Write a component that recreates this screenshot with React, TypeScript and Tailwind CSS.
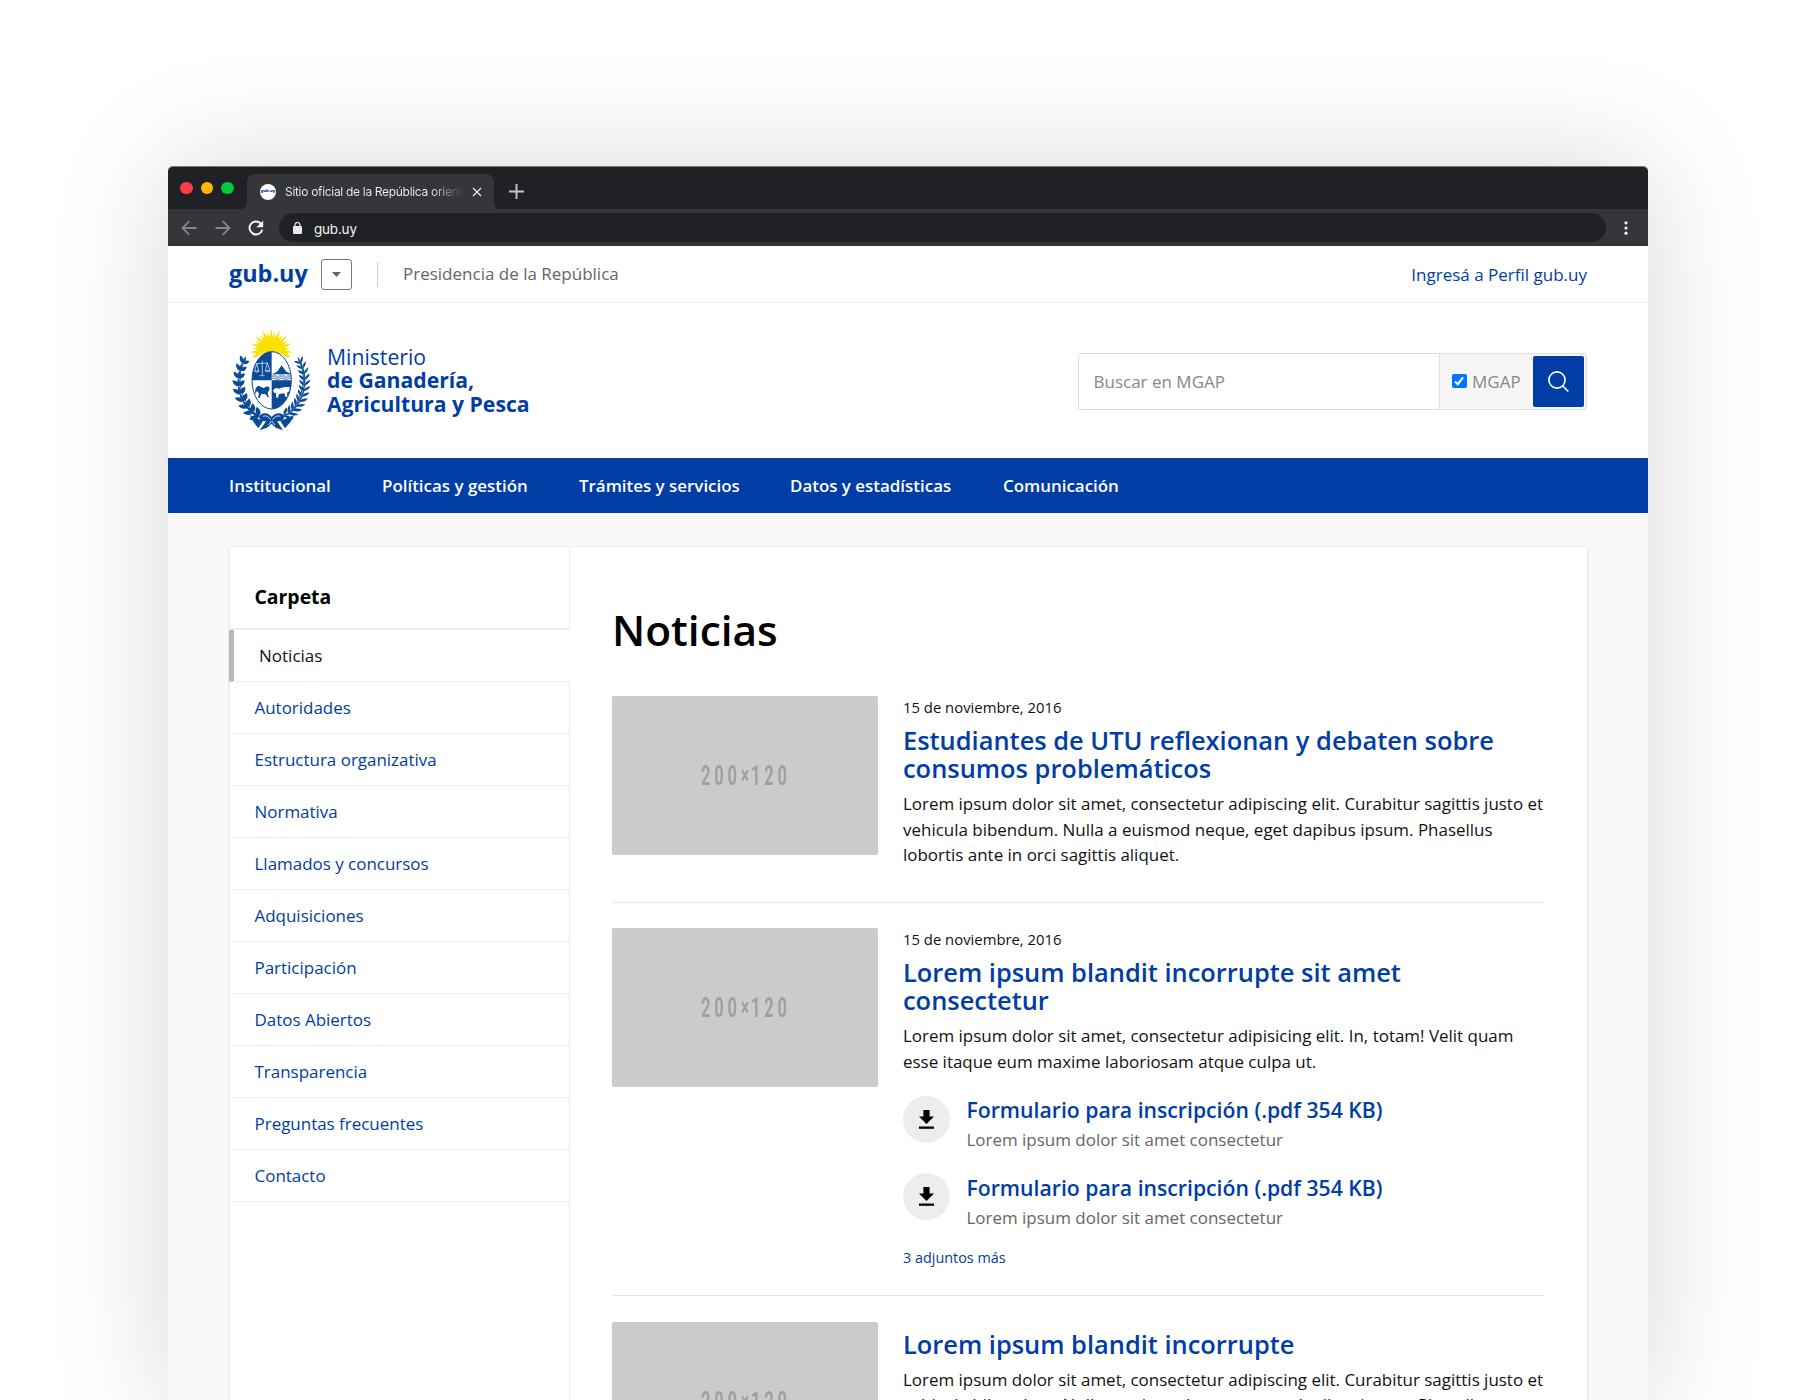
import React from "react";

const NAV = [
  { label: "Institucional", w: "w-[153px]" },
  { label: "Políticas y gestión", w: "w-[197px]" },
  { label: "Trámites y servicios", w: "w-[211px]" },
  { label: "Datos y estadísticas", w: "w-[213px]" },
  { label: "Comunicación", w: "w-[160px]" },
];

const FOLDER = [
  "Autoridades",
  "Estructura organizativa",
  "Normativa",
  "Llamados y concursos",
  "Adquisiciones",
  "Participación",
  "Datos Abiertos",
  "Transparencia",
  "Preguntas frecuentes",
  "Contacto",
];

function Leaf({ x, y, a, l, w }: { x: number; y: number; a: number; l: number; w: number }) {
  return (
    <path
      d={`M0 0C${l * 0.5} ${-w * 1.5} ${l * 1.3} ${-w * 1.4} ${l * 2} 0C${l * 1.3} ${w * 1.2} ${l * 0.5} ${w * 1.2} 0 0Z`}
      transform={`translate(${x} ${y}) rotate(${a})`}
    />
  );
}

function Branch({ right = false }: { right?: boolean }) {
  const leaves: React.ReactNode[] = [];
  const n = right ? 12 : 9;
  const l = right ? 14.5 : 15;
  const w = right ? 4 : 6.4;
  for (let i = 0; i < n; i++) {
    const t = ((112 + (i * 96) / (n - 1)) * Math.PI) / 180;
    const x = 130 + Math.cos(t) * 97;
    const y = 160 + Math.sin(t) * 112;
    const base = (Math.atan2(112 * Math.cos(t), -97 * Math.sin(t)) * 180) / Math.PI;
    const taper = 1.1 - (i / n) * 0.3;
    leaves.push(<Leaf key={`a${i}`} x={x} y={y} a={base - 44} l={l * taper} w={w * taper} />);
    leaves.push(<Leaf key={`b${i}`} x={x} y={y} a={base + 46} l={l * 0.82 * taper} w={w * taper} />);
    leaves.push(<Leaf key={`c${i}`} x={x} y={y} a={base - 4} l={l * 0.9 * taper} w={w * 0.6} />);
  }
  return (
    <g transform={right ? "translate(260 0) scale(-1 1)" : undefined}>
      <path d="M124 284C60 262 14 180 45 104" fill="none" stroke="#0a4a96" strokeWidth="3" />
      {leaves}
    </g>
  );
}

function Coat() {
  const rays: React.ReactNode[] = [];
  for (let i = 0; i < 17; i++) {
    const a = -184 + i * 11.75;
    rays.push(
      <path
        key={i}
        d={i % 2 === 0 ? "M24 -8L66 0L24 8Z" : "M24 -8L56 0L24 8Z"}
        transform={`translate(129 69) rotate(${a})`}
      />
    );
  }
  return (
    <svg className="h-[104px] w-[83px] shrink-0" viewBox="2 1 249 312">
      <g fill="#fae100">
        {rays}
        <circle cx="129" cy="69" r="36" />
      </g>
      <g fill="#0a4a96">
        <Branch />
        <Branch right />
        <path d="M96 262C108 252 122 258 130 268C138 258 152 252 166 262C172 272 160 284 146 280L164 308L142 300L130 288L116 300L94 308L114 280C98 284 88 272 96 262Z" />
        <path d="M64 262L104 280L90 302L76 284ZM198 262L156 280L170 302L186 284Z" />
      </g>
      <g fill="none" stroke="#fff" strokeWidth="2.4">
        <path d="M104 266C114 262 120 268 128 276M156 266C146 262 140 268 132 276M120 292L130 280L140 292" />
      </g>
      <ellipse cx="130" cy="158" rx="66" ry="93" fill="#fff" />
      <path d="M74 92A66 93 0 0 1 186 92L172 86Q130 60 88 86Z" fill="#fae100" />
      <clipPath id="shield">
        <ellipse cx="130" cy="158" rx="59" ry="86" />
      </clipPath>
      <ellipse cx="130" cy="158" rx="59" ry="86" fill="#fff" stroke="#0a4a96" strokeWidth="3" />
      <g clipPath="url(#shield)" fill="#0a4a96">
        <path d="M70 70H130V158H70ZM130 158H190V246H130Z" />
        <path d="M132 140L146 132L160 113L174 132L192 140Z" />
        <path
          d="M130 144Q136 138 142 144T154 144T166 144T178 144T190 144M130 149Q136 143 142 149T154 149T166 149T178 149T190 149M130 154Q136 148 142 154T154 154T166 154T178 154T190 154"
          fill="none"
          stroke="#0a4a96"
          strokeWidth="2"
        />
        <path d="M81 184L88 174L94 176L106 181L116 176L124 180L123 188L119 192L118 199L122 208L118 209L112 200L99 199L94 211L89 210L92 197L86 190L80 200Z" />
      </g>
      <g fill="none" stroke="#fff" strokeWidth="2">
        <path d="M102 99V142M84 108L119 106M94 144H109M85 108L79 130H92L85 108M117 106L111 129H125L117 106M79 131Q85 137 92 131M111 130Q118 136 125 130" />
      </g>
      <path
        d="M134 190C139 178 146 180 152 183C162 178 170 178 184 178L183 190L176 196L177 208H172L168 197L152 199L149 210H144L143 196L137 195Z"
        fill="#fff"
      />
    </svg>
  );
}

function BrowserBar() {
  return (
    <div className="h-20 overflow-hidden rounded-t-[5px] border-t border-[#77787a] bg-[#202124] font-['Inter',sans-serif]">
      <div className="flex h-[42px] items-end">
        <div className="flex h-[42px] w-[79px] items-center gap-2 pl-3">
          <i className="size-[12.5px] rounded-full bg-[#ff3b47]" />
          <i className="size-[12.5px] rounded-full bg-[#ffb700]" />
          <i className="size-[12.5px] rounded-full bg-[#00ca3c]" />
        </div>
        <div className="relative flex h-[35px] w-[247px] items-center rounded-t-[8px] bg-[#35363a] pl-[13px]">
          <svg className="absolute bottom-0 -left-[6px] size-[6px]" viewBox="0 0 6 6">
            <path d="M6 0A6 6 0 0 1 0 6H6Z" fill="#35363a" />
          </svg>
          <svg className="absolute -right-[6px] bottom-0 size-[6px]" viewBox="0 0 6 6">
            <path d="M0 0A6 6 0 0 0 6 6H0Z" fill="#35363a" />
          </svg>
          <span className="flex size-4 items-center justify-center rounded-full bg-white font-['Open_Sans',sans-serif] text-[4.2px] font-extrabold text-[#003da5]">
            gub.uy
          </span>
          <span className="mt-px ml-[9px] w-[178px] overflow-hidden bg-linear-to-r from-[#f1f1f1] from-82% to-[#35363a] bg-clip-text text-[12px] leading-5 tracking-[-0.31px] whitespace-nowrap text-transparent">
            Sitio oficial de la República oriental
          </span>
          <svg className="ml-[9px] size-[10px]" viewBox="0 0 10 10">
            <path d="M1 1L9 9M9 1L1 9" stroke="#e8eaed" strokeWidth="1.2" />
          </svg>
        </div>
        <svg className="mb-[10px] ml-[15px] size-[15px]" viewBox="0 0 15 15">
          <path d="M7.5 0V15M0 7.5H15" stroke="#c4c6ca" strokeWidth="1.9" />
        </svg>
      </div>
      <div className="flex h-[37px] items-center bg-[#35363a] pl-[13px]">
        <svg className="size-4" viewBox="0 0 16 16">
          <path d="M15.5 8H1.5M8.3 1.2L1.5 8L8.3 14.8" fill="none" stroke="#85868a" strokeWidth="1.8" />
        </svg>
        <svg className="ml-[18px] size-4" viewBox="0 0 16 16">
          <path d="M.5 8H14.5M7.7 1.2L14.5 8L7.7 14.8" fill="none" stroke="#85868a" strokeWidth="1.8" />
        </svg>
        <svg className="ml-[17px] size-4" viewBox="0 0 16 16">
          <path d="M12.9 3.6A6.5 6.5 0 1 0 14.3 9.8" fill="none" stroke="#f1f3f4" strokeWidth="2" />
          <path d="M15.2 .4V7.2H8.4Z" fill="#f1f3f4" />
        </svg>
        <div className="ml-[15px] flex h-[29px] w-[1327px] items-center rounded-full bg-[#202124] pl-[14px]">
          <svg className="h-[12px] w-[9px]" viewBox="0 0 9 12">
            <rect x="0" y="4" width="9" height="8" rx="1" fill="#e8eaed" />
            <path d="M2 5V3A2.5 2.5 0 0 1 7 3V5" fill="none" stroke="#e8eaed" strokeWidth="1.2" />
          </svg>
          <span className="mt-[2px] ml-[12px] text-[13.5px] leading-5 tracking-[-0.2px] text-[#f1f3f4]">gub.uy</span>
        </div>
        <svg className="ml-[18px] h-[14px] w-[4px]" viewBox="0 0 4 14">
          <circle cx="2" cy="1.8" r="1.6" fill="#f1f3f4" />
          <circle cx="2" cy="7" r="1.6" fill="#f1f3f4" />
          <circle cx="2" cy="12.2" r="1.6" fill="#f1f3f4" />
        </svg>
      </div>
    </div>
  );
}

function Thumb() {
  return (
    <div className="flex h-[159px] w-[265.5px] shrink-0 items-center justify-center rounded-[2px] bg-[#cbcbcb] font-['Roboto',sans-serif] text-[27.5px] font-bold text-[#a0a0a0]">
      <span className="mt-px ml-[3px] flex scale-x-[0.6] items-center tracking-[6.4px] whitespace-nowrap">
        200<span className="text-[25px] tracking-[3.5px]">×</span>120
      </span>
    </div>
  );
}

function Attachment() {
  return (
    <div className="flex h-[77.5px] gap-[16.5px]">
      <div className="flex size-[47px] items-center justify-center rounded-full bg-[#ededed]">
        <svg className="h-[19px] w-[15px]" viewBox="0 0 15 19">
          <path d="M4.4 0H10.6V6.6H15L7.5 14L0 6.6H4.4Z" />
          <path d="M0 16.5H15V18.8H0Z" />
        </svg>
      </div>
      <div>
        <div className="mt-[0.5px] text-[21.2px] leading-[28px] font-semibold whitespace-nowrap text-[#003da5]">
          Formulario para inscripción (.pdf 354 KB)
        </div>
        <div className="mt-[3px] text-[16.97px] leading-[25.5px] text-[#666]">Lorem ipsum dolor sit amet consectetur</div>
      </div>
    </div>
  );
}

function NewsItem({ date, title, lines, className = "", children }: {
  date?: string;
  title: string[];
  lines: string[];
  className?: string;
  children?: React.ReactNode;
}) {
  return (
    <article className={`flex gap-[25.5px] border-[#e8e8e8] ${className}`}>
      <Thumb />
      <div className="whitespace-nowrap">
        {date ? <div className="mb-[7.5px] text-[14.85px] leading-[22.5px]">{date}</div> : <div className="h-[8.5px]" />}
        <h2 className="text-[25.43px] leading-[28.3px] font-semibold text-[#003da5]">
          {title.map((t) => (
            <span key={t} className="block">{t}</span>
          ))}
        </h2>
        <p className="mt-[8.5px] text-[16.97px] leading-[25.5px]">
          {lines.map((t) => (
            <span key={t} className="block">{t}</span>
          ))}
        </p>
        {children}
      </div>
    </article>
  );
}

export default function App() {
  return (
    <div className="h-[1400px] w-[1820px] overflow-hidden bg-white px-[168px] pt-[166px] font-['Open_Sans',sans-serif] text-[#111]">
      <div className="h-[1240px] w-[1480px] rounded-t-[5px] bg-[#f9f9f9] shadow-[0_0_120px_rgba(0,0,0,0.16)]">
        <BrowserBar />

        <div className="flex h-[57px] items-center border-b border-[#ededed] bg-white px-[61px]">
          <span className="w-[92px] text-[23.4px] font-bold text-[#003da5]">gub.uy</span>
          <span className="flex size-[31px] items-center justify-center rounded-[3px] border border-[#777]">
            <svg className="h-[5px] w-[9px]" viewBox="0 0 9 5">
              <path d="M0 0H9L4.5 5Z" fill="#666" />
            </svg>
          </span>
          <span className="ml-[25px] h-[25px] border-l border-[#ccc]" />
          <span className="ml-[25px] text-[17px] text-[#666]">Presidencia de la República</span>
          <span className="mt-[2px] ml-auto text-[17px] text-[#003da5]">Ingresá a Perfil gub.uy</span>
        </div>

        <div className="flex h-[155px] items-start bg-white px-[61px] pt-[25px]">
          <Coat />
          <div className="mt-[17px] ml-[15px] text-[21.2px] leading-[23.4px] text-[#003da5]">
            <div>Ministerio</div>
            <div className="font-bold">de Ganadería,</div>
            <div className="font-bold">Agricultura y Pesca</div>
          </div>
          <div className="mt-[25px] ml-auto flex h-[57px] w-[509px] items-center rounded-[3px] border border-[#dfdfdf] bg-[#f6f6f6] text-[17px] text-[#888]">
            <div className="flex h-full w-[361px] items-center rounded-l-[3px] border-r border-[#dfdfdf] bg-white pl-[14.5px]">
              Buscar en MGAP
            </div>
            <span className="-mt-px ml-[12px] flex size-[14.5px] items-center justify-center rounded-[2px] bg-[#0075ff]">
              <svg className="size-[12px]" viewBox="0 0 12 12">
                <path d="M2 6.5L4.8 9.2L10 2.4" fill="none" stroke="#fff" strokeWidth="2" />
              </svg>
            </span>
            <span className="ml-[5.5px]">MGAP</span>
            <span className="mr-[2px] ml-auto flex h-[51px] w-[51px] items-center justify-center rounded-[2px] bg-[#003da5]">
              <svg className="size-[21px]" viewBox="0 0 21 21" fill="none" stroke="#fff" strokeWidth="1.6">
                <circle cx="9" cy="9" r="8.1" />
                <path d="M14.6 14.8L20.3 20.5" />
              </svg>
            </span>
          </div>
        </div>

        <nav className="flex h-[55px] items-center bg-[#003da5] pt-px pl-[61px] text-[16.93px] font-semibold text-white">
          {NAV.map((n) => (
            <span key={n.label} className={`shrink-0 whitespace-nowrap ${n.w}`}>{n.label}</span>
          ))}
        </nav>

        <div className="mt-[34px] mr-[61px] ml-[62px] flex h-[1000px] rounded-[3px] bg-white shadow-[0_1px_4px_rgba(0,0,0,0.12)]">
          <aside className="w-[340px] shrink-0">
            <div className="h-[83px] border-r border-b-2 border-[#ebebeb] pt-[35.5px] pl-[24.5px] text-[19.4px] leading-[28px] font-bold text-black">
              Carpeta
            </div>
            <div className="-ml-px flex h-[52px] items-center border-b border-l-[5px] border-b-[#ebebeb] border-l-[#b8b8b8] pl-[25px] text-[17px]">
              Noticias
            </div>
            {FOLDER.map((f) => (
              <div key={f} className="flex h-[52px] items-center border-r border-b border-[#ebebeb] pl-[24.5px] text-[16.97px] text-[#003da5]">
                {f}
              </div>
            ))}
            <div className="h-[345px] border-r border-[#ebebeb]" />
          </aside>

          <main className="w-[975px] shrink-0 pt-[54px] pl-[42px]">
            <h1 className="h-[95px] text-[42.4px] leading-[58.5px] font-semibold text-black">Noticias</h1>
            <NewsItem
              className="h-[207px] border-b"
              date="15 de noviembre, 2016"
              title={["Estudiantes de UTU reflexionan y debaten sobre", "consumos problemáticos"]}
              lines={[
                "Lorem ipsum dolor sit amet, consectetur adipiscing elit. Curabitur sagittis justo et",
                "vehicula bibendum. Nulla a euismod neque, eget dapibus ipsum. Phasellus",
                "lobortis ante in orci sagittis aliquet.",
              ]}
            />
            <NewsItem
              className="mt-[25px] h-[368px] border-b"
              date="15 de noviembre, 2016"
              title={["Lorem ipsum blandit incorrupte sit amet", "consectetur"]}
              lines={[
                "Lorem ipsum dolor sit amet, consectetur adipisicing elit. In, totam! Velit quam",
                "esse itaque eum maxime laboriosam atque culpa ut.",
              ]}
            >
              <div className="mt-[21.5px]">
                <Attachment />
                <Attachment />
              </div>
              <div className="-mt-[5px] text-[14.4px] leading-[24px] text-[#003da5]">3 adjuntos más</div>
            </NewsItem>
            <NewsItem
              className="mt-[25.5px]"
              title={["Lorem ipsum blandit incorrupte"]}
              lines={[
                "Lorem ipsum dolor sit amet, consectetur adipiscing elit. Curabitur sagittis justo et",
                "vehicula bibendum. Nulla a euismod neque, eget dapibus ipsum. Phasellus",
                "lobortis ante in orci sagittis aliquet.",
              ]}
            />
          </main>
        </div>
      </div>
    </div>
  );
}
